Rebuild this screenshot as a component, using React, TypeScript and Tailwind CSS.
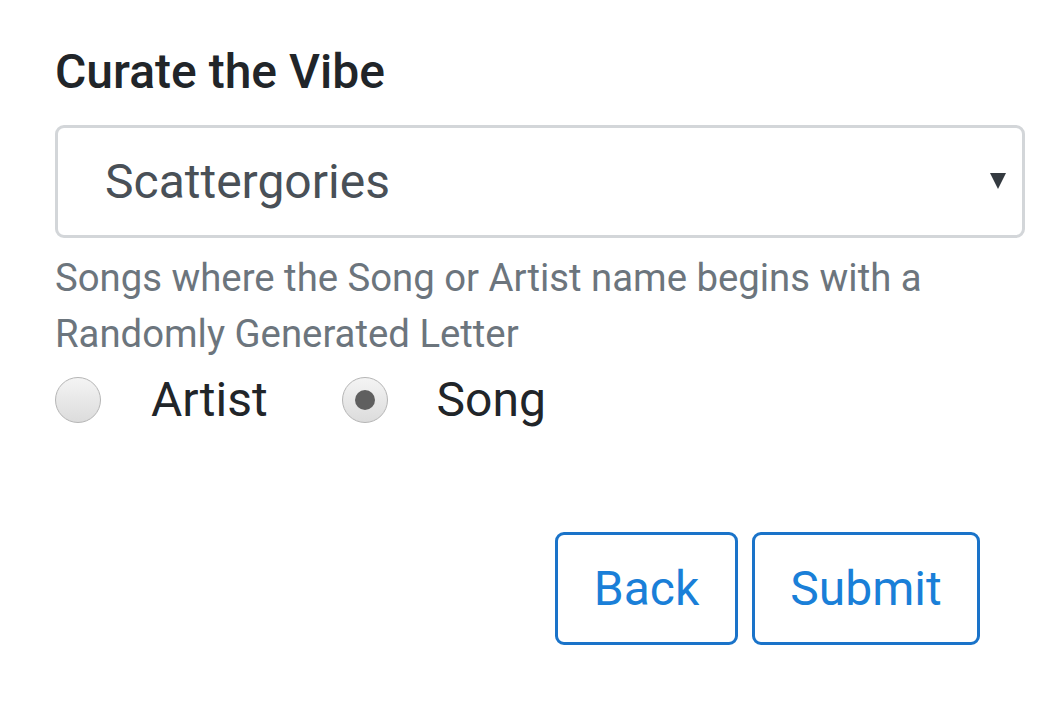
import { useState } from "react";

const App = () => {
  const [mode, setMode] = useState<"artist" | "song">("song");

  const Radio = ({ checked }: { checked: boolean }) => (
    <span className="w-[46px] h-[46px] rounded-full border border-[#b5b5b5] bg-gradient-to-b from-[#f4f4f4] to-[#dcdcdc] flex items-center justify-center shrink-0">
      {checked && <span className="w-[20px] h-[20px] rounded-full bg-[#5f5f5f]" />}
    </span>
  );

  return (
    <div className="min-h-screen bg-white font-['Roboto',sans-serif] pl-[55px] pr-[34px] pt-[44px]">
      <h1 className="text-[48px] leading-[56px] font-medium text-[#212529]">Curate the Vibe</h1>

      <div className="mt-[25px] h-[113px] border-[3px] border-[#d3d6d9] rounded-[9px] flex items-center justify-between pl-[47px] pr-[15px]">
        <span className="text-[48px] text-[#495057]">Scattergories</span>
        <svg width="18" height="18" viewBox="0 0 18 18" className="mt-[-2px]">
          <path d="M1 1 H17 L9 17 Z" fill="#343a40" />
        </svg>
      </div>

      <p className="mt-[12px] text-[38.3px] leading-[56px] text-[#6c757d] max-w-[900px]">
        Songs where the Song or Artist name begins with a Randomly Generated Letter
      </p>

      <div className="flex items-center mt-[10px]">
        <label className="flex items-center cursor-pointer" onClick={() => setMode("artist")}>
          <Radio checked={mode === "artist"} />
          <span className="ml-[50px] text-[48px] leading-[56px] text-[#212529]">Artist</span>
        </label>
        <label className="flex items-center cursor-pointer ml-[74px]" onClick={() => setMode("song")}>
          <Radio checked={mode === "song"} />
          <span className="ml-[49px] text-[48px] leading-[56px] text-[#212529]">Song</span>
        </label>
      </div>

      <div className="flex justify-end gap-[14px] mt-[104px] pr-[45px]">
        <button className="w-[183px] h-[113px] border-[3px] border-[#1a73c9] rounded-[9px] text-[48px] text-[#1a7fd8]">
          Back
        </button>
        <button className="w-[228px] h-[113px] border-[3px] border-[#1a73c9] rounded-[9px] text-[48px] text-[#1a7fd8]">
          Submit
        </button>
      </div>
    </div>
  );
};

export default App;
